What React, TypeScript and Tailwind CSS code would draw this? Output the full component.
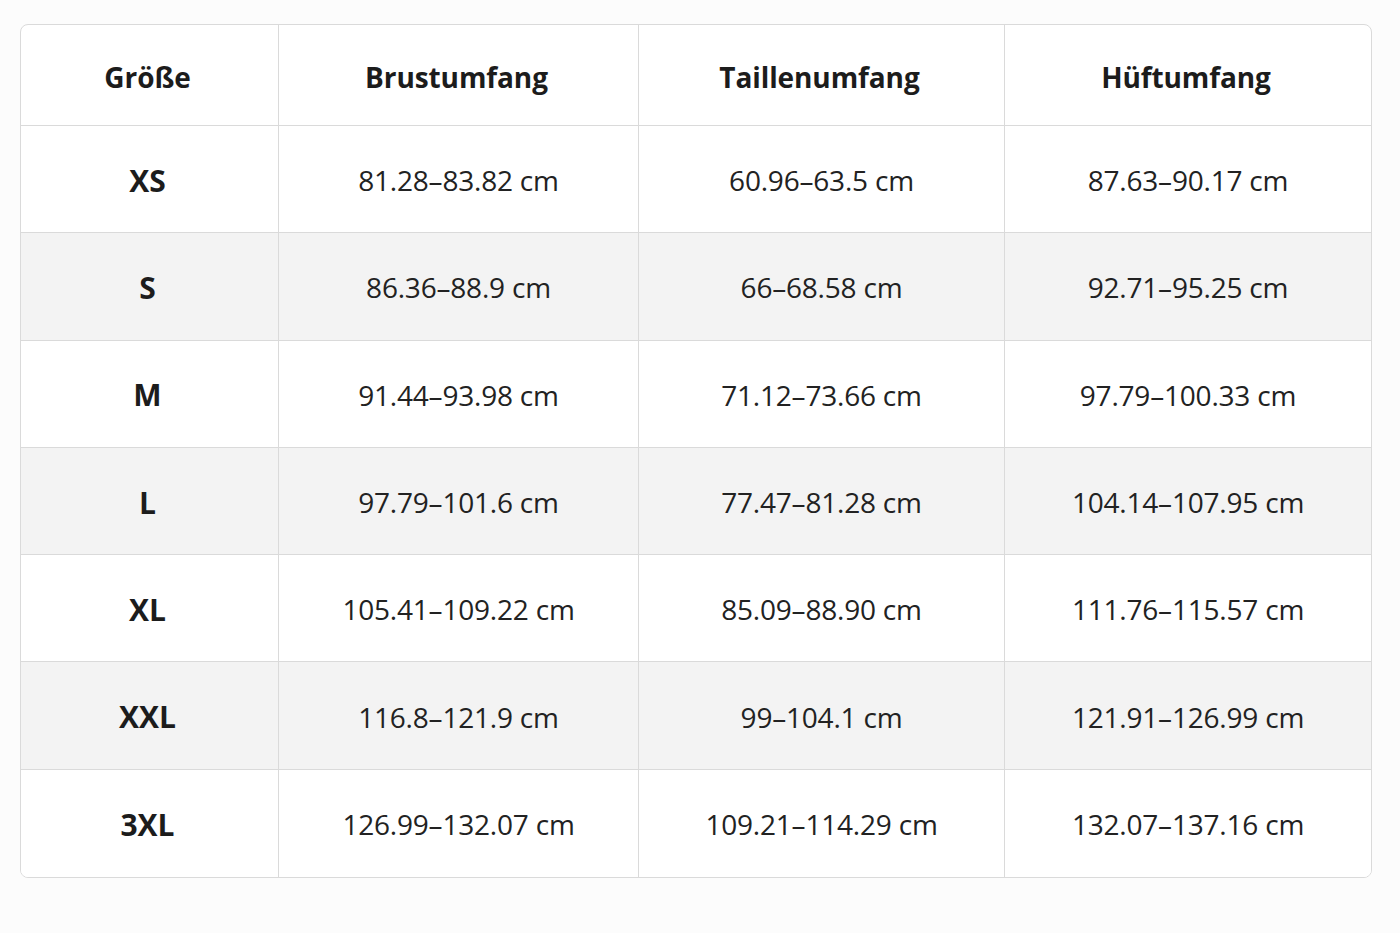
const rows: [string, string, string, string][] = [
  ["XS", "81.28–83.82 cm", "60.96–63.5 cm", "87.63–90.17 cm"],
  ["S", "86.36–88.9 cm", "66–68.58 cm", "92.71–95.25 cm"],
  ["M", "91.44–93.98 cm", "71.12–73.66 cm", "97.79–100.33 cm"],
  ["L", "97.79–101.6 cm", "77.47–81.28 cm", "104.14–107.95 cm"],
  ["XL", "105.41–109.22 cm", "85.09–88.90 cm", "111.76–115.57 cm"],
  ["XXL", "116.8–121.9 cm", "99–104.1 cm", "121.91–126.99 cm"],
  ["3XL", "126.99–132.07 cm", "109.21–114.29 cm", "132.07–137.16 cm"],
];

const headers = ["Größe", "Brustumfang", "Taillenumfang", "Hüftumfang"];

export default function App() {
  return (
    <div className="min-h-[933px] w-full bg-[#fcfcfc] pt-6 pl-5 pr-7 font-['Open_Sans',sans-serif] text-[#1c1c1c]">
      <div className="overflow-hidden rounded-lg border border-[#dadada] bg-white">
        {/* header */}
        <div className="grid h-[101px] grid-cols-[257px_360px_366px_1fr] border-b border-[#dadada]">
          {headers.map((h, i) => (
            <div
              key={h}
              className={`flex items-center justify-center pt-1 pr-1 text-[28px] font-bold tracking-[-0.1px] ${i > 0 ? "border-l border-[#dadada]" : ""}`}
            >
              {h}
            </div>
          ))}
        </div>

        {rows.map((r, ri) => (
          <div
            key={r[0]}
            className={`grid h-[107.3px] grid-cols-[257px_360px_366px_1fr] ${ri < rows.length - 1 ? "border-b border-[#dadada]" : ""} ${ri % 2 === 1 ? "bg-[#f3f3f3]" : "bg-white"}`}
          >
            <div className="flex items-center justify-center pt-0.5 pr-1 text-[30px] font-bold">{r[0]}</div>
            {r.slice(1).map((v, ci) => (
              <div
                key={ci}
                className="flex items-center justify-center border-l border-[#dadada] pt-0.5 text-[28px] font-normal tracking-[-0.2px] text-[#222]"
              >
                {v}
              </div>
            ))}
          </div>
        ))}
      </div>
    </div>
  );
}
